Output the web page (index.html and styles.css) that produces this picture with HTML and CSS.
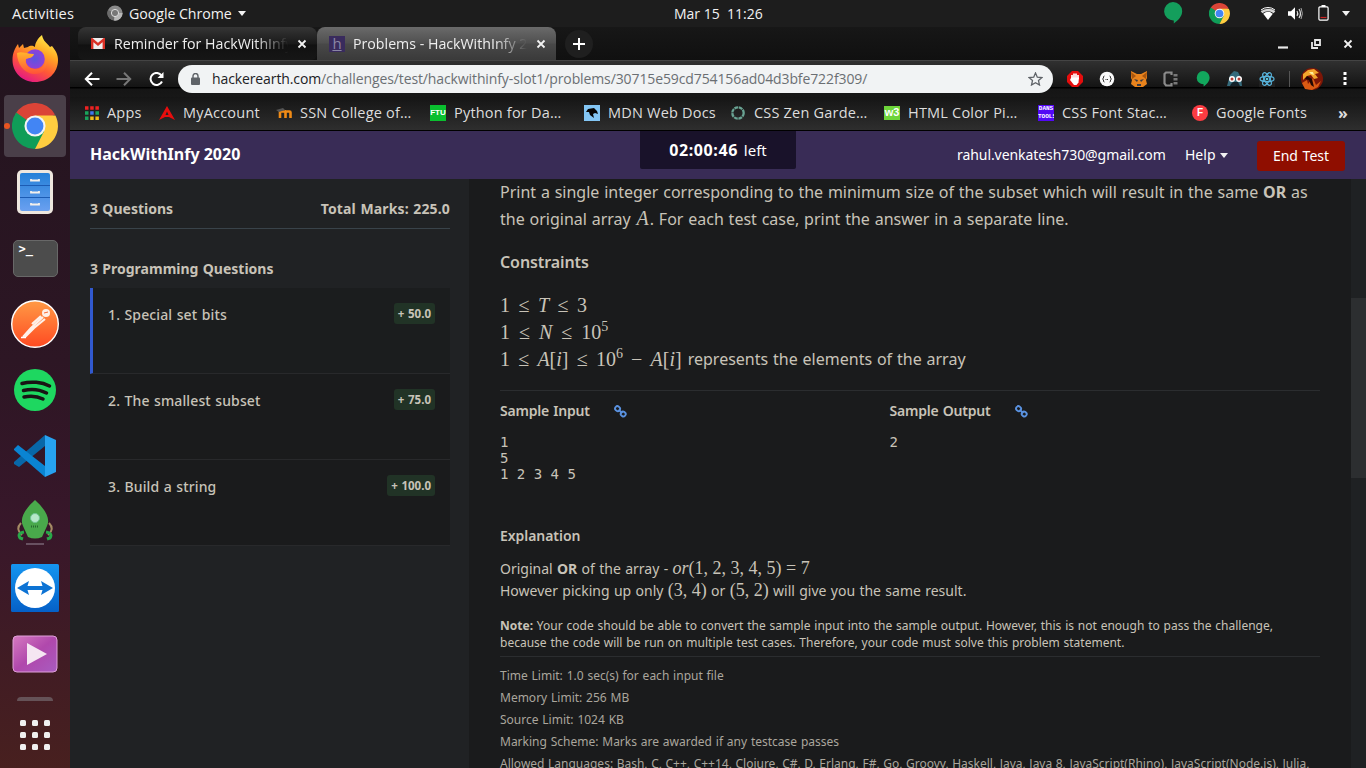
FILE: index.html
```html
<!DOCTYPE html>
<html lang="en">
<head>
<meta charset="utf-8">
<title>Problems - HackWithInfy 2020</title>
<link rel="stylesheet" href="styles.css">
</head>
<body>
<svg width="0" height="0" class="defs">
  <defs>
    <linearGradient id="fx" x1="0.8" y1="0" x2="0.3" y2="1"><stop offset="0" stop-color="#fff44f"/><stop offset=".35" stop-color="#ffa824"/><stop offset=".65" stop-color="#ff5a35"/><stop offset="1" stop-color="#e31587"/></linearGradient>
    <radialGradient id="fp"><stop offset="0" stop-color="#5a55e0"/><stop offset="1" stop-color="#9040d8"/></radialGradient>
    <linearGradient id="fh" x1="0" y1="0" x2="0" y2="1"><stop offset="0" stop-color="#ffb52b"/><stop offset="1" stop-color="#ff5138"/></linearGradient>
    <linearGradient id="pm" x1="0" y1="0" x2="0" y2="1"><stop offset="0" stop-color="#ff9a45"/><stop offset="1" stop-color="#ff4a22"/></linearGradient>
    <linearGradient id="tv" x1="0" y1="0" x2="0" y2="1"><stop offset="0" stop-color="#1595f0"/><stop offset="1" stop-color="#0560c8"/></linearGradient>
    <linearGradient id="vd" x1="0" y1="0" x2="1" y2="1"><stop offset="0" stop-color="#d67ac0"/><stop offset=".5" stop-color="#b048ac"/><stop offset="1" stop-color="#a85cc0"/></linearGradient>
    <linearGradient id="fl" x1="0" y1="0" x2="0" y2="1"><stop offset="0" stop-color="#2480d8"/><stop offset="1" stop-color="#6aa0f0"/></linearGradient>
    <symbol id="chrome" viewBox="0 0 48 48">
      <path d="M24 24 3.2 12A24 24 0 0 1 44.8 12z" fill="#db4437"/>
      <path d="M24 24 4.400 10A24 24 0 0 0 24 48L34.4 30z" fill="#0f9d58"/>
      <path d="M24 13H45.3A24 24 0 0 1 24 48L33.5 29.5z" fill="#ffcd40"/>
      <circle cx="24" cy="24" r="11" fill="#f4f4f4"/><circle cx="24" cy="24" r="8.8" fill="#4285f4"/>
    </symbol>
    <symbol id="link" viewBox="0 0 12 12"><g fill="none" stroke="#5a92e0" stroke-width="1.7"><rect x="1" y="1.3" width="4.6" height="4.2" rx="2" transform="rotate(40 3.3 3.4)"/><rect x="6.2" y="6.2" width="4.6" height="4.2" rx="2" transform="rotate(40 8.5 8.3)"/><path d="M4.3 4.3 7.6 7.6"/></g></symbol>
    <symbol id="close" viewBox="0 0 10 10"><path d="M1.5 1.5l7 7M8.5 1.5l-7 7" stroke="#f2f2f2" stroke-width="1.8"/></symbol>
  </defs>
</svg>

<header class="topbar">
  <span class="activities">Activities</span>
  <svg class="tb-chrome" width="16" height="16" viewBox="0 0 16 16"><circle cx="8" cy="8" r="7.6" fill="#8a8a8a"/><path d="M8 8 1 5A7.6 7.6 0 0 0 7 15.6z" fill="#6b6b6b"/><path d="M8 8h7.6A7.6 7.6 0 0 1 7 15.6z" fill="#b8b8b8"/><circle cx="8" cy="8" r="3.6" fill="#777" stroke="#ddd"/></svg>
  <span class="appname">Google Chrome</span><i class="caret"></i>
  <span class="clock">Mar 15&nbsp; 11:26</span>
  <svg class="tb-hang" width="20" height="22" viewBox="0 0 20 22"><path d="M10 0a9.2 9.2 0 0 1 9.2 9.3c0 5-4.2 9.5-8.4 12.2v-3A9.2 9.2 0 1 1 10 0z" fill="#149e5c"/></svg>
  <svg class="tb-chr" width="21" height="21"><use href="#chrome"/></svg>
  <svg class="tb-wifi" width="16" height="13" viewBox="0 0 16 13"><path d="M8 13 3.2 6.8a7.6 7.6 0 0 1 9.6 0z" fill="#fff"/><path d="M.7 4.3a11.5 11.5 0 0 1 14.6 0L13.6 6.2a9 9 0 0 0-11.2 0z" fill="#d5d5d5"/><path d="M1 3a11 11 0 0 1 14 0" stroke="#fff" fill="none"/></svg>
  <svg class="tb-vol" width="15" height="13" viewBox="0 0 15 13"><path d="M0 4.2h3L7 .3v12.4L3 8.8H0z" fill="#fff"/><path d="M9 4q1.600 2.500 0 5M11 2q3 4.500 0 9" stroke="#ddd" fill="none" stroke-width="1.2"/><path d="M13 1q2.800 5.500 0 11" stroke="#aaa" fill="none"/></svg>
  <svg class="tb-bat" width="11" height="16" viewBox="0 0 11 16"><path d="M3.500 0h4v2h-4z" fill="#fff"/><rect x=".9" y="1.900" width="9.200" height="13.200" rx="1" fill="none" stroke="#fff" stroke-width="1.200"/><path d="M2.500 12.500h6" stroke="#c22" stroke-width="1.200"/></svg>
  <i class="caret last"></i>
</header>

<div class="desktop">
  <nav class="dock">
    <div class="slot"><svg width="46" height="47" viewBox="0 0 46 47"><path d="M23 47C10 47 .5 37 .5 25 .5 18 3 13 6 9l1 4 4-4 1 4 4-1c3-2 5-1 7 0 0-4 3-9 7-12 1 6 5 8 8 12l2-1c5 6 6 10 6 14C46 38 36 47 23 47z" fill="url(#fx)"/><circle cx="23" cy="24" r="9.800" fill="url(#fp)"/><path d="M5 18c5-2 9 1 17 1-1 4-5 4-8 5-1 5 2 9 8 10 7 1 12-3 12-10 3 10-4 16-13 15C12 38 5 29 5 18z" fill="url(#fh)"/></svg></div>
    <div class="slot active"><i class="dot"></i><svg width="46" height="46"><use href="#chrome"/></svg></div>
    <div class="slot"><svg width="38" height="46" viewBox="0 0 38 46"><rect x="1" y="1" width="36" height="44" rx="5" fill="#eee7df"/><rect x="4" y="4" width="30" height="38" rx="2" fill="url(#fl)"/><path d="M4 16.500h30M4 28.500h30" stroke="#1c5cb4"/><path d="M15 10v1.500h8V10M15 22v1.500h8V22M15 34v1.500h8V34" stroke="#f4f0ec" stroke-width="1.800" fill="none"/></svg></div>
    <div class="slot"><div class="term">&gt;_</div></div>
    <div class="slot"><svg width="48" height="48" viewBox="0 0 48 48"><circle cx="24" cy="24" r="23.300" fill="url(#pm)" stroke="#fff" stroke-width="1.400"/><circle cx="35" cy="13" r="4" fill="#fff0e8"/><path d="M32 17 20 28l-8 9M34 19l-11 9-9 9M30 16l-9 8" stroke="#fff0e8" stroke-width="2.200" fill="none"/><path d="M33 13l4-1" stroke="#f76a35"/><path d="M10 37.500h5" stroke="#fff" stroke-width="1.500"/></svg></div>
    <div class="slot"><svg width="42" height="42" viewBox="0 0 42 42"><circle cx="21" cy="21" r="21" fill="#1ed760"/><path d="M8 14.500c9-2.500 20-1.500 27.500 2.500M9.500 21.500c8-2 16-1.200 23 2.500M10 28c7-1.500 13-1 19 2" stroke="#191414" stroke-width="3.500" stroke-linecap="round" fill="none"/></svg></div>
    <div class="slot"><svg width="42" height="42" viewBox="0 0 42 42"><path d="M0 27 31 0v11L5 32 0 29z" fill="#0867a8"/><path d="M0 14 4 10 31 31v11L0 15z" fill="#0a84d2"/><path d="M31 0l11 5v32l-11 5z" fill="#27a2f0"/></svg></div>
    <div class="slot"><svg width="38" height="46" viewBox="0 0 38 46"><path d="M5 24q-6 6 1 12M33 24q6 6-1 12" stroke="#a58b64" stroke-width="2" fill="none"/><path d="M8 33q-7 1-4 6l3 1M30 33q7 1 4 6l-3 1" stroke="#28a849" stroke-width="3" fill="none"/><path d="M19 1C28 9 35 19 31 27L26 38q-7 3-14 0L7 27C3 19 10 9 19 1z" fill="#49a94b"/><circle cx="19" cy="19" r="4.500" fill="#b5e8c8" stroke="#6fc493"/><path d="M15 27.500h8" stroke="#27682e" stroke-width="2" stroke-dasharray="1 1"/><path d="M10 45h18" stroke="#786574" stroke-width="1.500"/></svg></div>
    <div class="slot"><svg width="48" height="48" viewBox="0 0 48 48"><rect width="48" height="48" rx="1.500" fill="url(#tv)"/><circle cx="24" cy="24" r="20" fill="#fff"/><path d="M6 24 18 17l-1.500 5h15L30 17l12 7-12 7 1.500-5h-15L18 31z" fill="#0d73d4"/></svg></div>
    <div class="slot"><svg width="46" height="38" viewBox="0 0 46 38"><rect x="1" y="1" width="44" height="36" rx="4" fill="url(#vd)" stroke="#dfa0d8"/><path d="M15 8v22l20-11z" fill="#f5e6f2"/></svg></div>
    <div class="peek"></div>
    <svg class="grid" width="30" height="30" viewBox="0 0 30 30"><g fill="#f0f0f0"><rect width="6" height="6" rx="1.500"/><rect x="12" width="6" height="6" rx="1.500"/><rect x="24" width="6" height="6" rx="1.500"/><rect y="12" width="6" height="6" rx="1.500"/><rect x="12" y="12" width="6" height="6" rx="1.500"/><rect x="24" y="12" width="6" height="6" rx="1.500"/><rect y="24" width="6" height="6" rx="1.500"/><rect x="12" y="24" width="6" height="6" rx="1.500"/><rect x="24" y="24" width="6" height="6" rx="1.500"/></g></svg>
  </nav>

  <div class="browser">
    <div class="tabs">
      <div class="tab t1"><svg width="14" height="11" viewBox="0 0 14 11"><rect width="14" height="11" fill="#eee"/><path d="M1.200 11V1.500L7 6.500l5.800-5V11" fill="none" stroke="#d93025" stroke-width="2.400"/></svg><span class="tt">Reminder for HackWithInfy</span><svg class="x" width="10" height="10"><use href="#close"/></svg></div>
      <div class="tab t2"><span class="hicon">h</span><span class="tt">Problems - HackWithInfy 2020</span><svg class="x" width="10" height="10"><use href="#close"/></svg></div>
      <div class="newtab"><svg width="12" height="12"><path d="M6 0v12M0 6h12" stroke="#fff" stroke-width="2"/></svg></div>
      <div class="winbtns">
        <svg width="10" height="12"><path d="M0 9.500h10" stroke="#e8e8e8" stroke-width="2.200"/></svg>
        <svg width="10" height="10"><path d="M4 1h5v5H4zM1 3v6h6" stroke="#e8e8e8" stroke-width="1.800" fill="none"/></svg>
        <svg width="10" height="10"><use href="#close"/></svg>
      </div>
    </div>

    <div class="toolbar">
      <svg class="back" width="16" height="14" viewBox="0 0 16 14"><path d="M8 .8 1.800 7 8 13.200M2 7h13.500" stroke="#fff" stroke-width="2" fill="none"/></svg>
      <svg class="fwd" width="16" height="14" viewBox="0 0 16 14"><path d="M8 .8 14.200 7 8 13.200M14 7H.5" stroke="#777" stroke-width="2" fill="none"/></svg>
      <svg class="reload" width="16" height="14" viewBox="0 0 16 14"><path d="M13 9.500A6 6 0 1 1 12.500 3.500" stroke="#fff" stroke-width="2" fill="none"/><path d="M14.500 0v6H8.500z" fill="#fff"/></svg>
      <div class="omni">
        <svg class="lock" width="9" height="12" viewBox="0 0 9 12"><rect y="4.500" width="9" height="7.500" rx="1" fill="#5f6368"/><path d="M2 5V3a2.500 2.500 0 0 1 5 0v2" stroke="#5f6368" stroke-width="1.400" fill="none"/></svg>
        <span class="url"><b>hackerearth.com</b>/challenges/test/hackwithinfy-slot1/problems/30715e59cd754156ad04d3bfe722f309/</span>
        <svg class="star" width="15" height="14" viewBox="0 0 15 14"><path d="M7.500 1 9.300 5.200 14 5.600 10.500 8.600 11.500 13 7.500 10.700 3.500 13 4.500 8.600 1 5.600 5.700 5.200z" stroke="#5f6368" stroke-width="1.300" fill="none"/></svg>
      </div>
      <div class="exts">
        <svg width="16" height="16" viewBox="0 0 16 16"><path d="M5 0h6l5 5v6l-5 5H5l-5-5V5z" fill="#e40d0d"/><path d="M5 7V4M7 7V2.500M9 7V2.500M11 8V4" stroke="#fff" stroke-width="1.700"/><path d="M4.200 6.500H12l-.5 5-2 2.500H7L3 9z" fill="#fff"/></svg>
        <svg width="16" height="16" viewBox="0 0 16 16"><circle cx="8" cy="8" r="7.300" fill="#fafafa"/><path d="M5.500 5q-1.500 0-1 2l-1 1 1 1q-.5 2 1 2M10.500 5q1.500 0 1 2l1 1-1 1q.5 2-1 2" stroke="#333" fill="none"/><path d="M6.500 8.500h3" stroke="#333" stroke-dasharray="1 .5"/></svg>
        <svg width="16" height="16" viewBox="0 0 16 16"><path d="M0 0 6 3h4l6-3v7l-1 2 1 4-4 3H4l-4-3 1-4L0 7z" fill="#e8831d"/><path d="M3 8l4 1-1 2zM13 8l-4 1 1 2zM6 13h4v2H6z" fill="#393a42"/><path d="M0 1l5 4-4 3zM16 1l-5 4 4 3z" fill="#a8560f"/></svg>
        <svg width="16" height="16" viewBox="0 0 16 16"><path d="M8.500 4V1.500H3L1.500 3v9.500L3 14.500h5.500V12" fill="none" stroke="#8a8a8a" stroke-width="2.200"/><path d="M12.500 3v2.500M12.500 7v2.500M12.500 11v2.500" stroke="#777" stroke-width="4" /></svg>
        <svg width="16" height="16" viewBox="0 0 16 16"><path d="M8 0a6.600 6.600 0 0 1 6.600 6.600c0 4-3 7-6 9v-2.400A6.600 6.600 0 1 1 8 0z" fill="#12a75d"/></svg>
        <svg width="16" height="16" viewBox="0 0 16 16"><path d="M3 4 7 0l4 1 3 6 1 8H0z" fill="#356a7b"/><path d="M4 13 6 11h5l2 4H3z" fill="#15232b"/><circle cx="5" cy="8" r="3" fill="#fff"/><circle cx="12" cy="8" r="3" fill="#fff"/><circle cx="5" cy="8" r="1.500" fill="#b53b32"/><circle cx="12" cy="8" r="1.500" fill="#b53b32"/></svg>
        <svg width="16" height="16" viewBox="0 0 16 16"><rect width="16" height="16" fill="#202020"/><g fill="none" stroke="#58b4dc" stroke-width="1.200"><ellipse cx="8" cy="8" rx="7" ry="2.700"/><ellipse cx="8" cy="8" rx="7" ry="2.700" transform="rotate(60 8 8)"/><ellipse cx="8" cy="8" rx="7" ry="2.700" transform="rotate(120 8 8)"/></g><circle cx="8" cy="8" r="1.300" fill="#58c4dc"/></svg>
      </div>
      <i class="sep"></i>
      <svg class="avatar" width="22" height="22" viewBox="0 0 22 22"><circle cx="11" cy="11" r="11" fill="#7d1607"/><path d="M2 6 7 2l6-1 5 4-4 1 3 4-4 1-3-4-4 1-4 4z" fill="#f3a52c"/><path d="M1 15l5-3 1 4 5-6 3 7 5-4-3 6-6 3-7-1z" fill="#db5a13"/><path d="M6 8l5 3 2 8-3-2-2-5-4-1z" fill="#200704"/><path d="M8 4h4l1 3-3-1z" fill="#fff19c"/></svg>
      <svg class="kebab" width="4" height="14"><path d="M.5 0h3v3h-3zM.5 5h3v3h-3zM.5 10h3v3h-3z" fill="#fff"/></svg>
    </div>

    <div class="marks">
      <a class="bm"><svg width="14" height="14"><path d="M0 2h14" stroke="#ee2222" stroke-width="3.500" stroke-dasharray="3.500 1.700"/><path d="M0 7h3.500M10.400 7H14" stroke="#19a55c" stroke-width="3.500"/><path d="M5.200 7h3.500" stroke="#3e78ef" stroke-width="3.500"/><path d="M0 12.200h3.500" stroke="#19a55c" stroke-width="3.500"/><path d="M5.200 12.200H14" stroke="#f2bd19" stroke-width="3.500" stroke-dasharray="3.500 1.700"/></svg><span class="apps">Apps</span></a>
      <a class="bm"><svg width="16" height="16"><path d="M8 1 16 15l-6-3H6l-6 3zM8 6.500 6.500 10h3z" fill="#e80d0d" fill-rule="evenodd"/></svg><span>MyAccount</span></a>
      <a class="bm"><svg width="16" height="16"><path d="M4 13V6M9.500 13V7.500q0-1-1-1H5M14.500 13V7.500q0-1-1-1H9" fill="none" stroke="#f08b16" stroke-width="2.600"/><path d="M0 5 7 3l2 2-6 2z" fill="#555"/></svg><span>SSN College of…</span></a>
      <a class="bm"><span class="fav ftu">FTU</span><span>Python for Da…</span></a>
      <a class="bm"><svg width="16" height="16"><rect width="16" height="16" fill="#83c6f5"/><path d="M2 7 4 4l6-1 3 3 1 3-3-1-2 1 1 4-4-3-1-3z" fill="#050505"/></svg><span>MDN Web Docs</span></a>
      <a class="bm"><svg width="16" height="16"><circle cx="8" cy="8" r="5.700" fill="none" stroke="#69a393" stroke-width="2.300" stroke-dasharray="3.800 .7"/></svg><span>CSS Zen Garde…</span></a>
      <a class="bm"><span class="fav w3">w3</span><span>HTML Color Pi…</span></a>
      <a class="bm"><span class="fav dans">DANS<br>TOOLS</span><span>CSS Font Stac…</span></a>
      <a class="bm"><span class="fav gf">F</span><span>Google Fonts</span></a>
      <a class="bm more"><span>»</span></a>
    </div>

    <div class="hebar">
      <b class="title">HackWithInfy 2020</b>
      <div class="timer"><b>02:00:46</b> <span>left</span></div>
      <span class="mail">rahul.venkatesh730@gmail.com</span>
      <span class="help">Help</span><i class="caret"></i>
      <span class="end">End Test</span>
    </div>

    <div class="page">
      <aside>
        <div class="sum"><b>3 Questions</b><b class="total">Total Marks: 225.0</b></div>
        <h3>3 Programming Questions</h3>
        <div class="q cur"><span>1. Special set bits</span><b>+ 50.0</b></div>
        <div class="q"><span>2. The smallest subset</span><b>+ 75.0</b></div>
        <div class="q"><span>3. Build a string</span><b>+ 100.0</b></div>
      </aside>
      <main>
        <p class="lead"><span>Print a single integer corresponding to the minimum size of the subset which will result in the same <b>OR</b> as</span><br><span>the original array <em class="m">A</em>. For each test case, print the answer in a separate line.</span></p>
        <h4>Constraints</h4>
        <div class="math">
          <div><span class="m k1">1 ≤ <em>T</em> ≤ 3</span></div>
          <div><span class="m k2">1 ≤ <em>N</em> ≤ 10<sup>5</sup></span></div>
          <div><span class="m k3">1 ≤ <em>A</em>[<em>i</em>] ≤ 10<sup>6</sup> − <em>A</em>[<em>i</em>]</span><span class="rep">represents the elements of the array</span></div>
        </div>
        <div class="samples">
          <section><h5>Sample Input<svg width="13" height="13"><use href="#link"/></svg></h5><pre>1
5
1 2 3 4 5</pre></section>
          <section><h5>Sample Output<svg width="13" height="13"><use href="#link"/></svg></h5><pre>2</pre></section>
        </div>
        <h5 class="exp">Explanation</h5>
        <div class="expl">
          <div><span>Original <b>OR</b> of the array - </span><span class="m"><em>or</em>(1, 2, 3, 4, 5) = 7</span></div>
          <div><span>However picking up only </span><span class="m">(3, 4)</span> <span>or </span><span class="m">(5, 2)</span> <span>will give you the same result.</span></div>
        </div>
        <p class="note"><b>Note:</b> Your code should be able to convert the sample input into the sample output. However, this is not enough to pass the challenge,<br>because the code will be run on multiple test cases. Therefore, your code must solve this problem statement.</p>
        <div class="limits">
          <div>Time Limit: 1.0 sec(s) for each input file</div>
          <div>Memory Limit: 256 MB</div>
          <div>Source Limit: 1024 KB</div>
          <div>Marking Scheme: Marks are awarded if any testcase passes</div>
          <div class="langs">Allowed Languages: Bash, C, C++, C++14, Clojure, C#, D, Erlang, F#, Go, Groovy, Haskell, Java, Java 8, JavaScript(Rhino), JavaScript(Node.js), Julia,</div>
        </div>
      </main>
      <div class="scroll"><i></i></div>
    </div>
  </div>
</div>
</body>
</html>
```
FILE: styles.css
```css
* { box-sizing: border-box; }
body { margin: 0; width: 1366px; height: 768px; overflow: hidden; background: #1a1b1c; font-family: "Noto Sans", "Open Sans", sans-serif; font-size: 14px; color: #c8c3b8; display: flex; flex-direction: column; }
svg { display: block; flex: none; }
.defs { position: absolute; }
span, b { white-space: nowrap; }
.caret { width: 0; height: 0; border: 4.5px solid transparent; border-top: 5px solid #f2f2f2; border-bottom: 0; flex: none; }

.topbar { height: 27px; flex: none; background: #1d1d1d; color: #f2f2f2; display: flex; align-items: center; padding: 0 0 1px 12px; font: 14.5px "Open Sans", sans-serif; }
.activities { width: 95px; font-size: 14.6px; letter-spacing: .2px; }
.tb-chrome { margin-right: 6px; }
.appname { width: 109px; font-size: 14.2px; letter-spacing: -.05px; }
.clock { margin-left: 428px; width: 92px; font-size: 14px; }
.tb-hang { margin-left: 397px; }
.tb-chr { margin-left: 26px; }
.tb-wifi { margin-left: 30px; }
.tb-vol { margin-left: 12px; }
.tb-bat { margin-left: 15px; }
.last { margin-left: 13px; }

.desktop { flex: 1; display: flex; min-height: 0; }
.dock { width: 70px; flex: none; background: linear-gradient(#22141e, #2d1624 45%, #38172a 68%, #48201f); display: flex; flex-direction: column; align-items: center; padding-top: 2px; }
.slot { width: 62px; height: 62px; flex: none; margin-bottom: 4px; border-radius: 4px; display: flex; align-items: center; justify-content: center; position: relative; }
.slot:first-child svg { margin-top: -3px; }
.active { background: #4a3f49; }
.dot { position: absolute; left: 0; top: 28px; width: 6px; height: 6px; border-radius: 3px; background: #e95420; }
.term { width: 45px; height: 37px; border-radius: 5px; background: #4c4c4c; border: 1px solid #686868; color: #fff; font: bold 12px/12px "DejaVu Sans Mono", monospace; padding: 2px 5px; }
.peek { width: 36px; height: 4px; background: #655257; border-radius: 8px 8px 0 0; margin-top: 8px; flex: none; }
.grid { margin-top: 19px; }

.browser { flex: 1; min-width: 0; display: flex; flex-direction: column; }
.tabs { height: 33px; flex: none; background: linear-gradient(#171717, #101010); display: flex; padding-left: 8px; font: 14.2px "Open Sans", sans-serif; color: #eee; }
.tab { display: flex; align-items: center; width: 239px; border-radius: 8px 8px 6px 6px; }
.tt { overflow: hidden; width: 176px; margin-left: 9px; -webkit-mask-image: linear-gradient(90deg, #000 80%, transparent 99%); mask-image: linear-gradient(90deg, #000 80%, transparent 99%); }
.t1 { background: linear-gradient(#353535, #1a1a1a 50%, #111 55%, #161616); padding-left: 13px; }
.t2 { background: linear-gradient(#6a6a6a, #505050 48%, #484848 52%, #3a3a3a); border-radius: 8px 8px 0 0; padding-left: 12px; }
.t2 .tt { margin-left: 8px; }
.x { margin-left: 7px; }
.hicon { width: 16px; height: 16px; background: #392b5d; color: #8b86a5; font: 15px/14px "Open Sans"; text-align: center; text-decoration: underline; }
.newtab { width: 28px; height: 28px; margin: 3px 0 0 9px; border-radius: 14px; background: #1f1f1f; display: flex; align-items: center; justify-content: center; }
.winbtns { margin-left: auto; padding-right: 13px; display: flex; align-items: center; gap: 22.5px; padding-top: 1px; }

.toolbar { height: 37px; flex: none; border-top: 1px solid #444; background: linear-gradient(#303030, #141414 26px, #000 26px, #000 27px, #151515 28px, #171717); display: flex; align-items: center; padding: 0 0 0 14px; }
.fwd { margin-left: 16px; }
.reload { margin-left: 17px; }
.omni { width: 875px; height: 28px; margin-left: 13px; border-radius: 14px; background: #f1f3f4; display: flex; align-items: center; padding-left: 13px; font: 14px "Open Sans", sans-serif; color: #6b6f73; }
.url { margin-left: 12px; width: 816px; font-size: 14px; letter-spacing: -.11px; padding-bottom: 1px; }
.url b { font-weight: 400; color: #202124; }
.exts { display: flex; gap: 16px; margin-left: 14px; }
.sep { width: 1px; height: 16px; margin-left: 14px; background: #555; }
.avatar { margin-left: 11px; }
.kebab { margin-left: 20px; }

.marks { height: 34px; flex: none; display: grid; grid-template-columns: 74px 117px repeat(2, 154px) 146px repeat(3, 154px) 146px 20px; padding-left: 15px; background: linear-gradient(#151515, #2e2e2e); border-bottom: 1px solid #000; font: 14.5px "Open Sans", sans-serif; letter-spacing: .2px; color: #ddd; overflow: hidden; }
.bm { height: 31px; display: flex; align-items: center; gap: 8px; }
.fav { width: 16px; height: 16px; overflow: hidden; color: #fff; text-align: center; font: bold 8px/16px "Liberation Sans", sans-serif; letter-spacing: 0; }
.ftu { background: #0abf2f; }
.w3 { background: #6ed53a; font-size: 11px; height: 14px; line-height: 13px; }
.dans { background: #5208f5; font: bold 6px/8px "Liberation Mono", monospace; }
.gf { background: #fb3c42; border-radius: 8px; font-size: 10px; }
.more { font-weight: bold; font-size: 16px; }

.hebar { height: 48px; flex: none; background: #392c56; color: #fff; display: flex; align-items: center; padding-left: 20px; }
.title { width: 550px; font-size: 16px; line-height: 20px; margin-top: -2px; }
.timer { width: 156px; height: 38px; align-self: flex-start; background: #19122a; text-align: center; line-height: 38px; font-size: 15px; border-radius: 0 0 2px 2px; }
.timer b { font-size: 16px; letter-spacing: .6px; margin-right: 2px; }
.mail { margin: -1px 0 0 161px; width: 208px; letter-spacing: -.07px; }
.help { margin: -1px 4px 0 20px; width: 31px; }
.end { width: 88px; height: 30px; margin: 2px 0 0 29px; background: #8f0e00; border-radius: 3px; text-align: center; line-height: 29px; word-spacing: 1px; }

.page { flex: 1; min-height: 0; display: flex; word-spacing: .7px; }
aside { width: 399px; flex: none; background: #202224; padding: 20px 19px 0 20px; }
.sum { height: 30px; display: flex; justify-content: space-between; line-height: 20px; border-bottom: 1px solid #39434a; }
.total { letter-spacing: .15px; }
h3 { font-size: 14px; line-height: 20px; margin: 30px 0 9px; }
.q { height: 86px; background: #1a1b1c; border-bottom: 1px solid #28292b; display: flex; justify-content: space-between; align-items: flex-start; padding: 15px 15px 0 18px; line-height: 23px; }
.q span { font-weight: 500; letter-spacing: .12px; }
.q b { height: 21px; line-height: 21px; background: #213326; border-radius: 3px; padding: 0 4px; font-size: 11.5px; }
.cur { border-left: 3px solid #3159cf; padding-left: 15px; background: #1b1d1e; }
main { width: 882px; flex: none; padding-left: 31px; overflow: hidden; background: #1a1b1c; }
.lead { margin: 0; font-size: 16px; line-height: 27px; word-spacing: .65px; }
.lead .m { margin: 0 1px; }
h4 { margin: 16px 0; font-size: 16px; line-height: 27px; font-weight: 600; letter-spacing: -.1px; }
.m { font-family: "Liberation Serif", serif; font-size: 20px; line-height: 20px; word-spacing: 0; }
.math { font-size: 16px; }
.math > div { height: 27px; line-height: 27px; display: flex; }
.math .m { line-height: 27px; }
.math .k1 { word-spacing: 3.5px; }
.math .k2 { word-spacing: 4px; }
.math .k3 { word-spacing: 3.2px; }
sup { font-size: 14px; line-height: 0; vertical-align: 8px; }
.rep { margin-left: 6px; }
.samples { width: 820px; height: 124px; margin-top: 17px; border-top: 1px solid #2b2d2f; display: flex; }
section { width: 389.5px; }
h5 { margin: 0; font-size: 14px; line-height: 20px; font-weight: 600; letter-spacing: -.2px; display: flex; align-items: center; }
section h5 { padding-top: 10px; }
h5 svg { margin-left: 24px; }
pre { margin: 13px 0 0; font: 14px/16px "DejaVu Sans Mono", monospace; word-spacing: 0; }
.exp { margin-top: 12px; letter-spacing: -.05px; }
.expl { padding-top: 12px; }
.expl > div { height: 22px; line-height: 22px; white-space: pre; }
.expl .m { font-size: 18px; }
.note { margin: 14px 0 0; width: 820px; height: 41px; font-size: 12px; line-height: 17px; border-bottom: 1px solid #2b2d2f; padding-top: 1px; white-space: nowrap; }
.limits { padding-top: 8px; font-size: 12px; line-height: 22px; color: #aaa69d; white-space: nowrap; }
.langs { word-spacing: .45px; }
.scroll { flex: 1; background: #1f2123; padding-top: 119px; }
.scroll i { display: block; height: 180px; background: #2c2e30; }
```
